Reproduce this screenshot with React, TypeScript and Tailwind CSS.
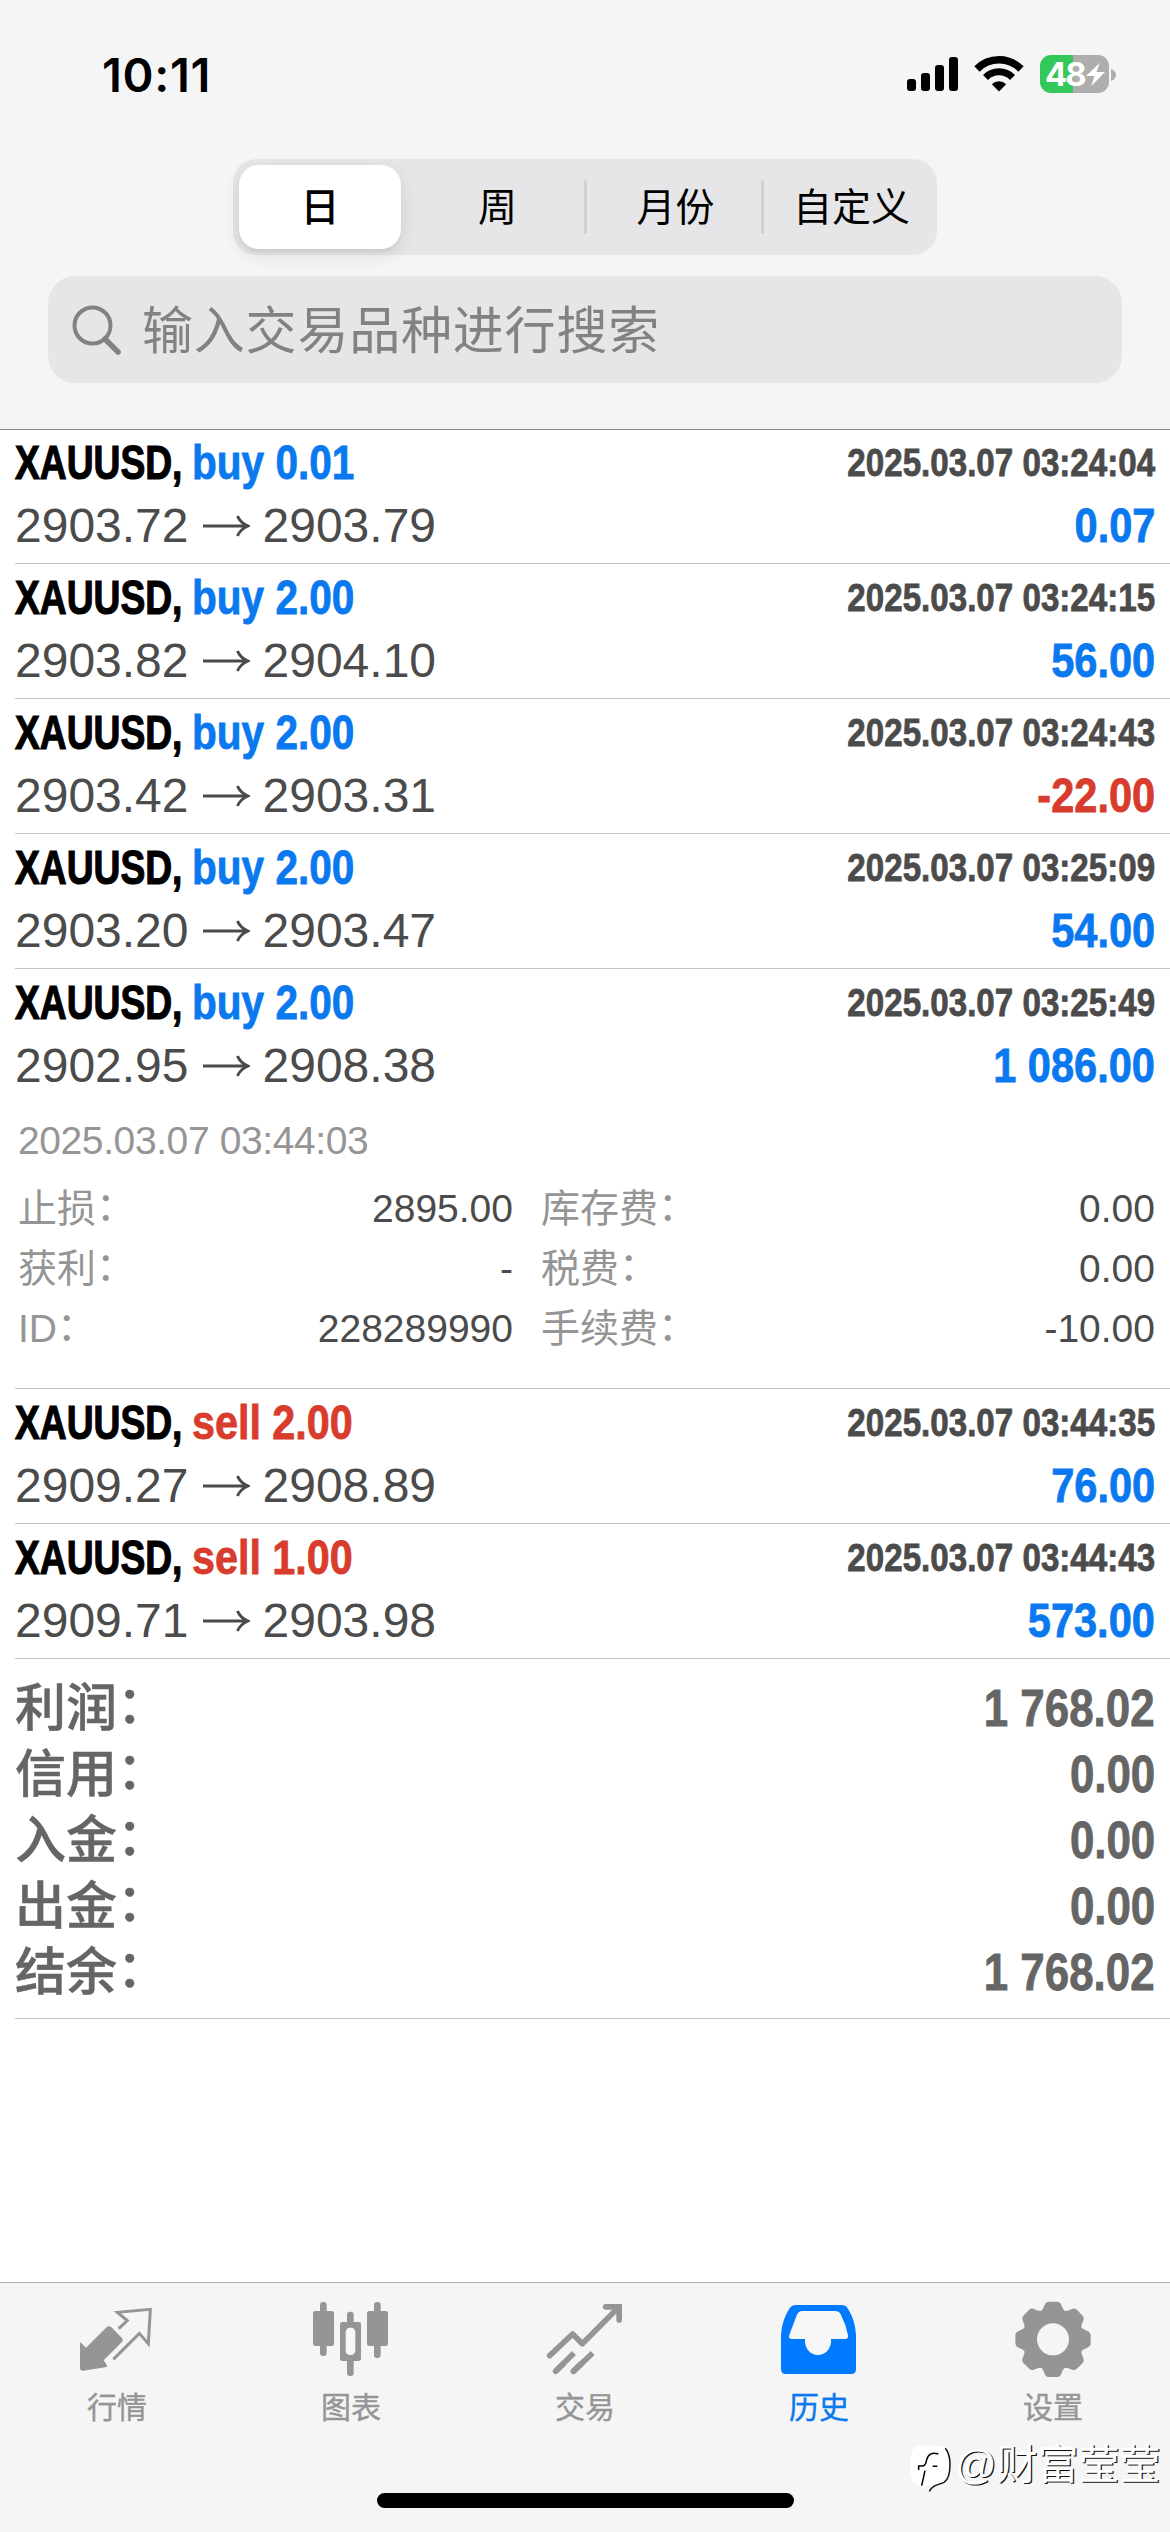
import type { ReactNode } from "react"
import clsx from "clsx"

type Deal = {
  side: "buy" | "sell"
  volume: string
  open: string
  close: string
  time: string
  profit: string
  expanded?: boolean
}

const deals: Deal[] = [
  { side: "buy", volume: "0.01", open: "2903.72", close: "2903.79", time: "2025.03.07 03:24:04", profit: "0.07" },
  { side: "buy", volume: "2.00", open: "2903.82", close: "2904.10", time: "2025.03.07 03:24:15", profit: "56.00" },
  { side: "buy", volume: "2.00", open: "2903.42", close: "2903.31", time: "2025.03.07 03:24:43", profit: "-22.00" },
  { side: "buy", volume: "2.00", open: "2903.20", close: "2903.47", time: "2025.03.07 03:25:09", profit: "54.00" },
  { side: "buy", volume: "2.00", open: "2902.95", close: "2908.38", time: "2025.03.07 03:25:49", profit: "1 086.00", expanded: true },
  { side: "sell", volume: "2.00", open: "2909.27", close: "2908.89", time: "2025.03.07 03:44:35", profit: "76.00" },
  { side: "sell", volume: "1.00", open: "2909.71", close: "2903.98", time: "2025.03.07 03:44:43", profit: "573.00" },
]

const details = [
  ["止损", "2895.00", "库存费", "0.00"],
  ["获利", "-", "税费", "0.00"],
  ["ID", "228289990", "手续费", "-10.00"],
]

const summary = [
  ["利润", "1 768.02"],
  ["信用", "0.00"],
  ["入金", "0.00"],
  ["出金", "0.00"],
  ["结余", "1 768.02"],
]

function StatusBar() {
  return (
    <div className="flex h-[159px] items-start justify-between pl-[102px] pr-[54px] pt-[55px]">
      <div className="font-['Inter',sans-serif] text-[47px] font-semibold leading-[40px] tracking-[0.7px] text-black">10:11</div>
      <div className="flex">
        <svg width="52" height="38" viewBox="0 0 52 38">
          <rect x="0" y="24" width="9" height="12" rx="3" />
          <rect x="14" y="18" width="9" height="18" rx="3" />
          <rect x="28" y="10" width="9" height="26" rx="3" />
          <rect x="42" y="2" width="9" height="34" rx="3" />
        </svg>
        <svg className="ml-[15px]" width="50" height="38" viewBox="0 0 50 38">
          <path d="M3 14A31 31 0 0 1 47 14" fill="none" stroke="#000" strokeWidth="7.5" />
          <path d="M11.500 22.500A19 19 0 0 1 38.500 22.500" fill="none" stroke="#000" strokeWidth="7" />
          <path d="M25 36.5L17.8 29.2A10.5 10.5 0 0 1 32.2 29.2Z" />
        </svg>
        {/* Battery */}
        <div className="ml-[16px] flex h-[38px] w-[69px] items-center rounded-[11px] bg-[linear-gradient(90deg,#34c759_33px,#aeaeae_33px)] pl-[5px]">
          <span className="font-['Inter',sans-serif] text-[33px] font-bold leading-none tracking-[-2px] text-white">48</span>
          <svg className="ml-[1px]" width="19" height="23" viewBox="0 0 18 23" preserveAspectRatio="none">
            <path d="M13 0L0 13H8L5 23L18 9H10Z" fill="#fff" />
          </svg>
        </div>
        <svg className="ml-[2px] mt-[14px]" width="5" height="12" viewBox="0 0 5 12">
          <path d="M0 0Q5 2 5 6T0 12Z" fill="#aeaeae" />
        </svg>
      </div>
    </div>
  )
}

function PeriodTabs() {
  return (
    <div className="mx-auto flex h-[96px] w-[704px] items-center rounded-[24px] bg-[#e6e6e8] text-[39px] leading-none text-black">
      <div className="ml-[6px] flex h-[84px] w-[162px] items-center justify-center rounded-[20px] bg-white font-medium shadow-[0_6px_18px_rgba(0,0,0,0.10),0_3px_3px_rgba(0,0,0,0.04)]">日</div>
      <div className="flex w-[183px] justify-center pl-[10px]">周</div>
      <div className="h-[54px] w-[3px] rounded-full bg-[#d0d0d3]" />
      <div className="flex w-[174px] justify-center pl-[3px]">月份</div>
      <div className="h-[54px] w-[3px] rounded-full bg-[#d0d0d3]" />
      <div className="flex w-[173px] justify-center pl-[2px]">自定义</div>
    </div>
  )
}

function SearchField() {
  return (
    <div className="mx-[48px] mt-[21px] flex h-[107px] items-center rounded-[27px] bg-[#e6e6e8] pl-[24px] text-[#828284]">
      <svg width="50" height="50" viewBox="0 0 50 50" fill="none" stroke="currentColor">
        <circle cx="20.5" cy="20.5" r="18" strokeWidth="4" />
        <path d="M33 34L46 47" strokeWidth="5.5" strokeLinecap="round" />
      </svg>
      <span className="ml-[20px] pt-[4px] text-[51px] leading-none tracking-[0.8px]">输入交易品种进行搜索</span>
    </div>
  )
}

// Full-width colon, lifted to sit on the middle of the line
function Colon() {
  return <span className="relative top-[-0.06em]">：</span>
}

// Condensed bold text, anchored to the right edge
function Condensed({ className, children }: { className?: string; children: ReactNode }) {
  return (
    <span className={clsx("inline-block origin-right whitespace-nowrap font-bold [-webkit-text-stroke:0.8px_currentColor]", className)}>
      {children}
    </span>
  )
}

function Arrow() {
  return (
    <svg className="mx-[13px]" width="48" height="22" viewBox="0 0 48 22" fill="none" stroke="#4b4b4b" strokeWidth="3">
      <path d="M1 11H46M35.500 1Q38 7.500 46 11Q38 14.500 35.500 21" />
    </svg>
  )
}

function DealDetails() {
  return (
    <div className="h-[285px] pt-[8px] text-[39px] text-[#959595]">
      <div className="ml-[3px] h-[60px] leading-[60px] tracking-[-0.4px]">2025.03.07 03:44:03</div>
      <div className="mt-[8px]">
        {details.map(([a, av, b, bv]) => (
          <div key={a} className="flex h-[60px] leading-[60px]">
            <div className="ml-[3px] flex w-[495px] justify-between">
              <span>{a}<Colon /></span>
              <span className="text-[#4b4b4b]">{av}</span>
            </div>
            <div className="ml-[28px] flex flex-1 justify-between">
              <span>{b}<Colon /></span>
              <span className="text-[#4b4b4b]">{bv}</span>
            </div>
          </div>
        ))}
      </div>
    </div>
  )
}

function DealRow({ deal }: { deal: Deal }) {
  const blue = "text-[#0a78ee]"
  const red = "text-[#d83c2c]"
  return (
    <div className="ml-[15px] border-b border-[#c4c4c4] pr-[15px] text-[48px]">
      <div className="h-[134px] pt-[2px]">
        <div className="flex h-[63px] justify-between leading-[63px]">
          <div className="flex">
            <span className="w-[177px] origin-left scale-x-[0.775] whitespace-nowrap font-bold text-black [-webkit-text-stroke:1.2px_currentColor]">XAUUSD,</span>
            <span
              className={clsx(
                "origin-left whitespace-nowrap font-bold [-webkit-text-stroke:0.8px_currentColor]",
                deal.side === "buy" ? "scale-x-[0.845]" : "scale-x-[0.86]",
                deal.side === "buy" ? blue : red
              )}
            >
              {deal.side} {deal.volume}
            </span>
          </div>
          <Condensed className="scale-x-[0.85] text-[39px] text-[#4b4b4b]">{deal.time}</Condensed>
        </div>
        <div className="flex h-[64px] items-center justify-between leading-[64px] text-[#4b4b4b]">
          <div className="flex items-center">
            {deal.open}
            <Arrow />
            {deal.close}
          </div>
          <Condensed className={clsx("scale-x-[0.865]", deal.profit.startsWith("-") ? red : blue)}>{deal.profit}</Condensed>
        </div>
      </div>
      {deal.expanded && <DealDetails />}
    </div>
  )
}

function Summary() {
  return (
    <div className="ml-[15px] border-b border-[#c4c4c4] pb-[12px] pr-[15px] pt-[17px] text-[51px] text-[#656565]">
      {summary.map(([label, value]) => (
        <div key={label} className="flex h-[66px] justify-between leading-[66px]">
          <span className="font-medium [-webkit-text-stroke:0.5px_currentColor]">{label}<Colon /></span>
          <Condensed className="scale-x-[0.86]">{value}</Condensed>
        </div>
      ))}
    </div>
  )
}

const tabs: { label: string; active?: boolean; icon: ReactNode }[] = [
  {
    label: "行情",
    icon: (
      <svg width="80" height="80" viewBox="231 114 240 240">
        <path d="M240 246L258 263L320 202Q327 195 334 202L365 233Q372 240 365 247L311 301L320 314Q324 320 316 322L250 332Q240 333 240 324Z" fill="currentColor" />
        <path d="M356 206L382 182L352 157L451 148L445 251L418 220L340 298" fill="none" stroke="currentColor" strokeWidth="9" />
      </svg>
    ),
  },
  {
    label: "图表",
    icon: (
      <svg width="80" height="80" viewBox="933 114 240 240" fill="currentColor">
        <rect x="960" y="126" width="20" height="162" rx="9" />
        <rect x="939" y="153" width="63" height="105" rx="7" />
        <rect x="1122" y="126" width="20" height="168" rx="9" />
        <rect x="1101" y="153" width="63" height="105" rx="7" />
        <rect x="1041" y="155" width="20" height="193" rx="9" />
        <rect x="1020" y="186" width="63" height="117" rx="7" />
        <rect x="1037" y="203" width="29" height="82" rx="13" fill="#f7f7f7" />
      </svg>
    ),
  },
  {
    label: "交易",
    icon: (
      <svg width="80" height="80" viewBox="285 114 240 240" fill="none" stroke="currentColor" strokeWidth="17" strokeLinecap="round">
        <path d="M299 287L368 222L397 251L503 145" strokeLinejoin="round" />
        <path d="M467 140.500H507.500V180" />
        <path d="M480 140L507 140V168Z" fill="currentColor" stroke="none" />
        <path d="M317 334L372 279M370 334L428 279" strokeLinecap="butt" />
        <path d="M317 334L340 311M370 334L394 311" />
      </svg>
    ),
  },
  {
    label: "历史",
    active: true,
    icon: (
      <svg width="80" height="80" viewBox="987 114 240 240">
        <path d="M1038 135H1174Q1187 135 1193 145C1210 172 1217 200 1218 228V328Q1218 342 1204 342H1007Q993 342 993 328V228C994 200 1003 168 1019 145Q1026 135 1038 135Z" fill="#007aff" />
        <path d="M1058 153H1154Q1167 153 1172 163Q1188 194 1194 226Q1196 237 1185 237H1143V244A39 41 0 0 1 1065 244V237H1026Q1014 237 1018 225L1040 166Q1045 153 1058 153Z" fill="#f7f7f7" />
      </svg>
    ),
  },
  {
    label: "设置",
    icon: (
      <svg width="80" height="80" viewBox="-120 -124 240 240" fill="currentColor">
        <circle r="91" />
        {[0, 45, 90, 135, 180, 225, 270, 315].map((deg) => (
          <path key={deg} transform={`rotate(${deg})`} d="M-42 -80C-30 -88 -29 -94 -25 -103Q-21 -113 -12 -113H12Q21 -113 25 -103C29 -94 30 -88 42 -80Z" />
        ))}
        <circle r="48" fill="#f5f5f5" />
      </svg>
    ),
  },
]

function TabBar() {
  return (
    <div className="relative h-[250px] border-t border-[#b0b0b0] bg-[#f5f5f5] pt-[15px]">
      <div className="grid grid-cols-5">
        {tabs.map((tab) => (
          <div key={tab.label} className={clsx("flex flex-col items-center", tab.active ? "text-[#0a78ee]" : "text-[#959595]")}>
            {tab.icon}
            <span className="mt-[10px] text-[30px] leading-[40px] [-webkit-text-stroke:0.4px_currentColor]">{tab.label}</span>
          </div>
        ))}
      </div>
      <div className="absolute left-[377px] top-[210px] h-[15px] w-[417px] rounded-full bg-black" />

      {/* Author watermark */}
      <div className="absolute left-[910px] top-[156px] flex items-center">
        <svg width="43" height="52" viewBox="30 30 129 156" fill="none" className="overflow-visible">
          <path d="M55 50H115Q148 50 148 105Q148 158 112 166L92 182V170H60Q30 168 30 110Q30 52 55 50Z" fill="#fff" />
          <path d="M136 58Q150 76 150 105Q150 150 132 160C116 168 98 166 88 187" stroke="#111" strokeWidth="4.500" />
          <path d="M115 75Q88 66 80 92Q77 111 68 111H56V123M75 125L65 170M98 112H112" stroke="#000" strokeWidth="4.500" />
        </svg>
        <span className="ml-[2px] whitespace-nowrap text-[41px] leading-[50px] text-white [text-shadow:1.2px_1.2px_0_#111]">@财富莹莹</span>
      </div>
    </div>
  )
}

export default function App() {
  return (
    <div className="flex h-[2532px] w-[1170px] flex-col overflow-hidden bg-white font-['Liberation_Sans','Noto_Sans_CJK_SC',sans-serif]">
      <div className="h-[430px] border-b border-[#8c8c8c] bg-[#f5f5f5]">
        <StatusBar />
        <PeriodTabs />
        <SearchField />
      </div>
      <div className="-mt-px flex-1">
        {deals.map((deal) => (
          <DealRow key={deal.time} deal={deal} />
        ))}
        <Summary />
      </div>
      <TabBar />
    </div>
  )
}
